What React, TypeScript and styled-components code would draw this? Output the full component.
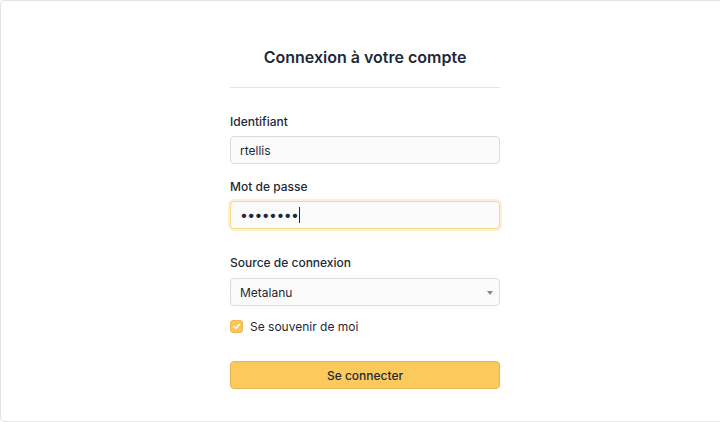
import React from "react";
import styled, { createGlobalStyle } from "styled-components";

const Global = createGlobalStyle`
  html, body { margin: 0; padding: 0; background: #ffffff; overflow: hidden; }
  body { font-family: Inter, "Noto Sans", sans-serif; color: #1f2937; }
  * { box-sizing: border-box; }
`;

const Card = styled.div`
  width: 730px;
  height: 422px;
  border: 1px solid #e3e3e3;
  border-radius: 4px;
  background: #fff;
  display: flex;
  justify-content: center;
`;

const Form = styled.div`
  width: 270px;
  padding-top: 46px;
  display: flex;
  flex-direction: column;
`;

const Title = styled.h1`
  margin: 0;
  font-size: 16px;
  line-height: 20px;
  font-weight: 600;
  text-align: center;
  color: #1f2937;
`;

const Rule = styled.hr`
  margin: 20px 0 0;
  border: 0;
  border-top: 1px solid #e5e5e5;
`;

const Label = styled.div<{ $top: number }>`
  margin-top: ${(p) => p.$top}px;
  font-size: 12px;
  line-height: 16px;
  font-weight: 500;
  color: #1f2937;
`;

const Field = styled.div<{ $focus?: boolean; $gap?: number }>`
  margin-top: ${(p) => p.$gap ?? 6}px;
  height: 28px;
  border: 1px solid ${(p) => (p.$focus ? "#f6d88f" : "#dcdcdc")};
  box-shadow: ${(p) => (p.$focus ? "0 0 0 2px #fdf0d2" : "none")};
  border-radius: 4px;
  background: #fbfbfb;
  padding: 0 9px;
  display: flex;
  align-items: center;
  font-size: 12px;
  color: #1f2937;
  position: relative;
`;

const Dots = styled.span`
  font-size: 14px;
  letter-spacing: -0.6px;
  color: #1f2937;
  line-height: 1;
`;

const Caret = styled.span`
  display: inline-block;
  width: 1px;
  height: 16px;
  background: #1f2937;
  margin-left: 1px;
`;

const Arrow = styled.span`
  position: absolute;
  right: 6px;
  top: 12px;
  width: 0;
  height: 0;
  border-left: 3px solid transparent;
  border-right: 3px solid transparent;
  border-top: 4px solid #888;
`;

const CheckRow = styled.div`
  margin-top: 13px;
  display: flex;
  align-items: center;
  gap: 7px;
  font-size: 12px;
  line-height: 15px;
  color: #1f2937;
`;

const Box = styled.span`
  width: 13px;
  height: 13px;
  border-radius: 3px;
  background: #f8c65d;
  border: 1px solid #eeb94a;
  display: flex;
  align-items: center;
  justify-content: center;
`;

const Button = styled.div`
  margin-top: 27px;
  height: 28px;
  border-radius: 4px;
  background: #fcc95d;
  border: 1px solid #e8b452;
  display: flex;
  align-items: center;
  justify-content: center;
  font-size: 12px;
  font-weight: 500;
  color: #1f2937;
`;

export default function App() {
  return (
    <>
      <Global />
      <Card>
        <Form>
          <Title>Connexion à votre compte</Title>
          <Rule />
          <Label $top={26}>Identifiant</Label>
          <Field>rtellis</Field>
          <Label $top={15}>Mot de passe</Label>
          <Field $focus>
            <Dots>••••••••</Dots>
            <Caret />
          </Field>
          <Label $top={26}>Source de connexion</Label>
          <Field $gap={7}>
            Metalanu
            <Arrow />
          </Field>
          <CheckRow>
            <Box>
              <svg width="9" height="9" viewBox="0 0 10 10">
                <path d="M2 5.2 L4.2 7.3 L8.2 2.8" fill="none" stroke="#fff" strokeWidth="1.6" strokeLinecap="round" strokeLinejoin="round" />
              </svg>
            </Box>
            Se souvenir de moi
          </CheckRow>
          <Button>Se connecter</Button>
        </Form>
      </Card>
    </>
  );
}
